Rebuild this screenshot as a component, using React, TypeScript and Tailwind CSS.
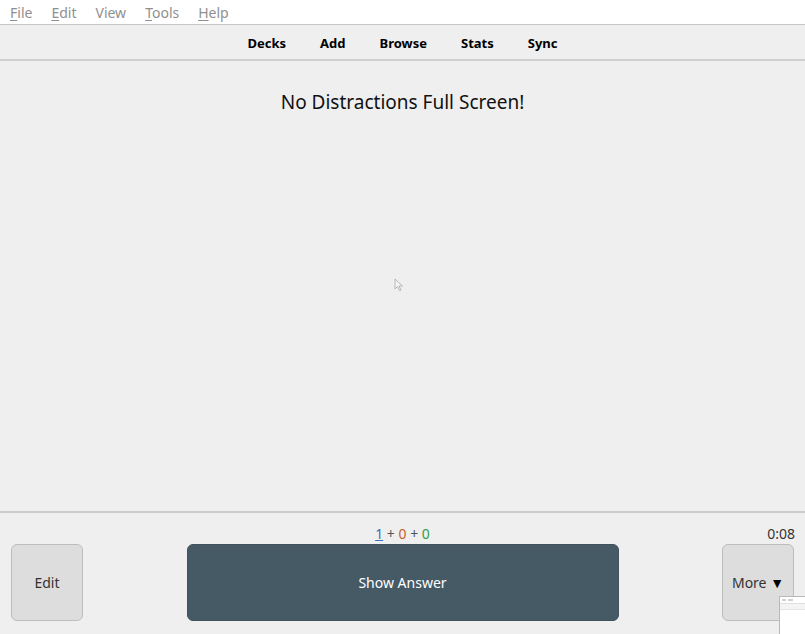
import React from "react";

export default function App() {
  const font = { fontFamily: '"Noto Sans", "Open Sans", sans-serif' };
  return (
    <div className="relative w-[805px] h-[634px] overflow-hidden bg-[#efefef] flex flex-col" style={font}>
      {/* menu bar */}
      <div className="h-[25px] bg-white border-b border-[#c8c8c8] flex items-center pl-[10px] gap-[19px] text-[14px] text-[#8f8f8f] shrink-0">
        <span><span className="underline underline-offset-2">F</span>ile</span>
        <span><span className="underline underline-offset-2">E</span>dit</span>
        <span>View</span>
        <span><span className="underline underline-offset-2">T</span>ools</span>
        <span><span className="underline underline-offset-2">H</span>elp</span>
      </div>
      {/* toolbar */}
      <div className="h-[36px] bg-[#efefef] border-b-2 border-[#d0d0d0] flex items-center justify-center text-[13px] font-bold text-black shrink-0 pt-[3px]">
        <span className="px-[17px]">Decks</span>
        <span className="px-[17px]">Add</span>
        <span className="px-[17px]">Browse</span>
        <span className="px-[17px]">Stats</span>
        <span className="px-[17px]">Sync</span>
      </div>
      {/* content */}
      <div className="flex-1 flex flex-col items-center">
        <div className="mt-[27px] text-[19px] text-[#111]">No Distractions Full Screen!</div>
      </div>
      {/* bottom */}
      <div className="h-[123px] border-t-2 border-[#cccccc] shrink-0 relative px-[11px]">
        <div className="flex items-center h-[31px] pt-[9px] relative">
          <div className="flex-1 text-center text-[14px] text-[#555] whitespace-pre">
            <span className="text-[#3b6fc4] underline">1</span>
            <span>{" + "}</span>
            <span className="text-[#c8611f]">0</span>
            <span>{" + "}</span>
            <span className="text-[#2ea043]">0</span>
          </div>
          <div className="absolute right-[-1px] text-[14px] text-[#333]">0:08</div>
        </div>
        <div className="flex items-center justify-between">
          <div className="w-[72px] h-[77px] rounded-[6px] bg-[#dddddd] border border-[#bdbdbd] flex items-center justify-center text-[14px] text-[#333]">Edit</div>
          <div className="w-[432px] h-[77px] rounded-[6px] bg-[#465a66] border border-[#3f525d] flex items-center justify-center text-[14px] text-white">Show Answer</div>
          <div className="w-[72px] h-[77px] rounded-[6px] bg-[#dddddd] border border-[#bdbdbd] flex items-center justify-center text-[14px] text-[#333]">More&nbsp;<span className="text-black text-[14px]">▼</span></div>
        </div>
      </div>
      {/* cursor */}
      <svg className="absolute left-[394px] top-[278px]" width="10" height="14" viewBox="0 0 10 14">
        <path d="M1 1 L1 11 L3.5 8.5 L5.5 12.5 L7 12 L5 8 L8.5 8 Z" fill="#f4f4f4" stroke="#a8a8a8" strokeWidth="0.8" />
      </svg>
      {/* mini window */}
      <div className="absolute left-[779px] top-[596px] w-[30px] h-[40px] bg-white border border-[#b8b8b8]">
        <div className="h-[7px] border-b border-[#e0e0e0] flex gap-[2px] px-[2px] items-center">
          <div className="w-[4px] h-[2px] bg-[#d0d0d0]" />
          <div className="w-[5px] h-[2px] bg-[#d0d0d0]" />
        </div>
        <div className="h-[6px] bg-[#f4f4f4] border-b border-[#e4e4e4]" />
      </div>
    </div>
  );
}
